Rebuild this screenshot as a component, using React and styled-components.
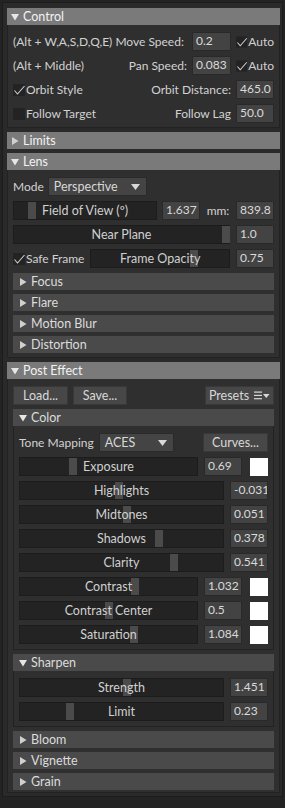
import React from 'react';
import styled, { createGlobalStyle } from 'styled-components';

const GlobalStyle = createGlobalStyle`
  html, body {
    margin: 0;
    padding: 0;
    background: #232323;
  }
  body {
    font-family: Lato, "Open Sans", "DejaVu Sans", sans-serif;
    font-size: 12px;
    color: #d4d4d4;
  }
`;

const Outer = styled.div`
  width: 285px;
  height: 808px;
  box-sizing: border-box;
  padding: 2px 2px 0 2px;
  background: #232323;
`;

const Frame = styled.div`
  border: 1px solid #1c1c1c;
  background: #2a2a2a;
  padding: 5px 2px 3px 4px;
  display: flex;
  flex-direction: column;
  gap: 4px;
`;

const HeaderBar = styled.div`
  height: 17px;
  display: flex;
  align-items: center;
  gap: 4px;
  padding-left: ${(p) => (p.$sub ? 6 : 4)}px;
  background: ${(p) => (p.$sub ? '#4a4a4a' : '#7a7a7a')};
  color: ${(p) => (p.$sub ? '#dcdcdc' : '#f2f2f2')};
  font-size: 12.5px;
  line-height: 17px;
  white-space: nowrap;
`;

const Body = styled.div`
  border: 1px solid #222;
  border-top: none;
  background: #2f2f2f;
  padding: 7px 5px ${(p) => p.$pb || 4}px 5px;
  display: flex;
  flex-direction: column;
  gap: ${(p) => p.$gap || 5}px;
`;

const Stack = styled.div`
  display: flex;
  flex-direction: column;
  gap: 4px;
`;

const Row = styled.div`
  height: 19px;
  display: flex;
  align-items: center;
  gap: ${(p) => p.$gap ?? 5}px;
  white-space: nowrap;
`;

const Text = styled.span`
  color: #d2d2d2;
  font-size: 12px;
  flex: ${(p) => (p.$grow ? 1 : 'none')};
  text-align: ${(p) => p.$align || 'left'};
`;

const NumBox = styled.div`
  width: ${(p) => p.$w || 38}px;
  height: 19px;
  box-sizing: border-box;
  flex: none;
  background: #434343;
  border: 1px solid #292929;
  padding: 0 3px;
  font-size: 12px;
  line-height: 16px;
  color: #dadada;
  overflow: hidden;
`;

const CheckWrap = styled.span`
  display: inline-flex;
  align-items: center;
  gap: 1px;
  flex: none;
  width: ${(p) => (p.$w ? `${p.$w}px` : 'auto')};
`;

const SliderTrack = styled.div`
  position: relative;
  height: 19px;
  box-sizing: border-box;
  flex: ${(p) => (p.$w ? 'none' : 1)};
  width: ${(p) => (p.$w ? `${p.$w}px` : 'auto')};
  background: #232323;
  border: 1px solid #1c1c1c;
  display: flex;
  align-items: center;
  justify-content: center;
`;

const SliderHandle = styled.div`
  position: absolute;
  top: 0;
  bottom: 0;
  width: 8px;
  background: #4b4b4b;
`;

const SliderLabel = styled.span`
  position: relative;
  color: #d0d0d0;
  font-size: 12.5px;
`;

const Dropdown = styled.div`
  width: ${(p) => p.$w}px;
  height: 19px;
  box-sizing: border-box;
  flex: none;
  background: #444;
  border: 1px solid #2a2a2a;
  padding: 0 6px 0 5px;
  display: flex;
  align-items: center;
  justify-content: space-between;
  color: #d8d8d8;
  font-size: 12.5px;
`;

const Button = styled.div`
  width: ${(p) => p.$w}px;
  height: 19px;
  box-sizing: border-box;
  flex: none;
  background: #474747;
  border: 1px solid #383838;
  display: flex;
  align-items: center;
  justify-content: center;
  gap: 5px;
  color: #d8d8d8;
  font-size: 12.5px;
`;

const Spacer = styled.div`
  flex: 1;
`;

const Swatch = styled.div`
  width: 18px;
  height: 18px;
  flex: none;
  margin-left: 2px;
  background: #fff;
`;

const Arrow = ({ open }) => (
  <svg width="8" height="8" viewBox="0 0 8 8">
    {open ? (
      <polygon points="0,1 8,1 4,7.5" fill="#e6e6e6" />
    ) : (
      <polygon points="1,0 7.5,4 1,8" fill="#d0d0d0" />
    )}
  </svg>
);

const CheckIcon = ({ on }) => (
  <svg width="12" height="12" viewBox="0 0 12 12">
    <rect x="0" y="0" width="12" height="12" fill="#232323" />
    {on && <polyline points="1.5,6.5 4.5,10 11.5,2" fill="none" stroke="#cfcfcf" strokeWidth="1.1" />}
  </svg>
);

const MenuIcon = () => (
  <svg width="16" height="9" viewBox="0 0 16 9">
    <rect x="0" y="0.5" width="8" height="1.2" fill="#d8d8d8" />
    <rect x="0" y="3.8" width="8" height="1.2" fill="#d8d8d8" />
    <rect x="0" y="7.1" width="8" height="1.2" fill="#d8d8d8" />
    <polygon points="9,3 15.5,3 12.25,7" fill="#d8d8d8" />
  </svg>
);

const DropTri = () => (
  <svg width="9" height="6" viewBox="0 0 9 6">
    <polygon points="0,0 9,0 4.5,6" fill="#d8d8d8" />
  </svg>
);

const Header = ({ title, open, sub }) => (
  <HeaderBar $sub={sub}>
    <Arrow open={open} />
    <span>{title}</span>
  </HeaderBar>
);

const Check = ({ on, label, w }) => (
  <CheckWrap $w={w}>
    <CheckIcon on={on} />
    <Text>{label}</Text>
  </CheckWrap>
);

const Slider = ({ label, at, w }) => (
  <SliderTrack $w={w}>
    <SliderHandle style={{ left: at }} />
    <SliderLabel>{label}</SliderLabel>
  </SliderTrack>
);

const colorRows = [
  { label: 'Exposure', value: '0.69', at: 49, swatch: true },
  { label: 'Highlights', value: '-0.031', at: 95 },
  { label: 'Midtones', value: '0.051', at: 103 },
  { label: 'Shadows', value: '0.378', at: 135 },
  { label: 'Clarity', value: '0.541', at: 150 },
  { label: 'Contrast', value: '1.032', at: 111, swatch: true },
  { label: 'Contrast Center', value: '0.5', at: 85, swatch: true },
  { label: 'Saturation', value: '1.084', at: 110, swatch: true },
];

export default function App() {
  return (
    <Outer>
      <GlobalStyle />
      <Frame>
        <div>
          <Header title="Control" open />
          <Body>
            <Row>
              <Text $grow>(Alt + W,A,S,D,Q,E) Move Speed:</Text>
              <NumBox $w={39}>0.2</NumBox>
              <Check on label="Auto" w={38} />
            </Row>
            <Row>
              <Text>(Alt + Middle)</Text>
              <Text $grow $align="right">Pan Speed:</Text>
              <NumBox $w={39}>0.083</NumBox>
              <Check on label="Auto" w={38} />
            </Row>
            <Row>
              <Check on label="Orbit Style" />
              <Text $grow $align="right">Orbit Distance:</Text>
              <NumBox>465.0</NumBox>
            </Row>
            <Row>
              <Check label="Follow Target" />
              <Text $grow $align="right">Follow Lag</Text>
              <NumBox>50.0</NumBox>
            </Row>
          </Body>
        </div>

        <Header title="Limits" />

        <div>
          <Header title="Lens" open />
          <Body $pb={4}>
            <Row $gap={4}>
              <Text>Mode</Text>
              <Dropdown $w={99}>
                <span>Perspective</span>
                <DropTri />
              </Dropdown>
            </Row>
            <Row>
              <Slider label="Field of View (º)" at={14} w={144} />
              <NumBox>1.637</NumBox>
              <Text $grow $align="center">mm:</Text>
              <NumBox>839.8</NumBox>
            </Row>
            <Row $gap={6}>
              <Slider label="Near Plane" at={208} />
              <NumBox>1.0</NumBox>
            </Row>
            <Row $gap={6}>
              <Check on label="Safe Frame" />
              <Slider label="Frame Opacity" at={99} />
              <NumBox>0.75</NumBox>
            </Row>
            <Stack>
              <Header title="Focus" sub />
              <Header title="Flare" sub />
              <Header title="Motion Blur" sub />
              <Header title="Distortion" sub />
            </Stack>
          </Body>
        </div>

        <div>
          <Header title="Post Effect" open />
          <Body $gap={4} $pb={2}>
            <Row>
              <Button $w={55}>Load...</Button>
              <Button $w={54}>Save...</Button>
              <Spacer />
              <Button $w={69}>
                Presets
                <MenuIcon />
              </Button>
            </Row>
            <div>
              <Header title="Color" open sub />
              <Body $pb={5}>
                <Row>
                  <Text>Tone Mapping</Text>
                  <Dropdown $w={75}>
                    <span>ACES</span>
                    <DropTri />
                  </Dropdown>
                  <Spacer />
                  <Button $w={65}>Curves...</Button>
                </Row>
                {colorRows.map((r) => (
                  <Row key={r.label} $gap={6}>
                    <Slider label={r.label} at={r.at} />
                    <NumBox>{r.value}</NumBox>
                    {r.swatch && <Swatch />}
                  </Row>
                ))}
              </Body>
            </div>
            <div>
              <Header title="Sharpen" open sub />
              <Body $pb={5}>
                <Row $gap={6}>
                  <Slider label="Strength" at={103} />
                  <NumBox>1.451</NumBox>
                </Row>
                <Row $gap={6}>
                  <Slider label="Limit" at={46} />
                  <NumBox>0.23</NumBox>
                </Row>
              </Body>
            </div>
            <Header title="Bloom" sub />
            <Header title="Vignette" sub />
            <Header title="Grain" sub />
          </Body>
        </div>
      </Frame>
    </Outer>
  );
}
